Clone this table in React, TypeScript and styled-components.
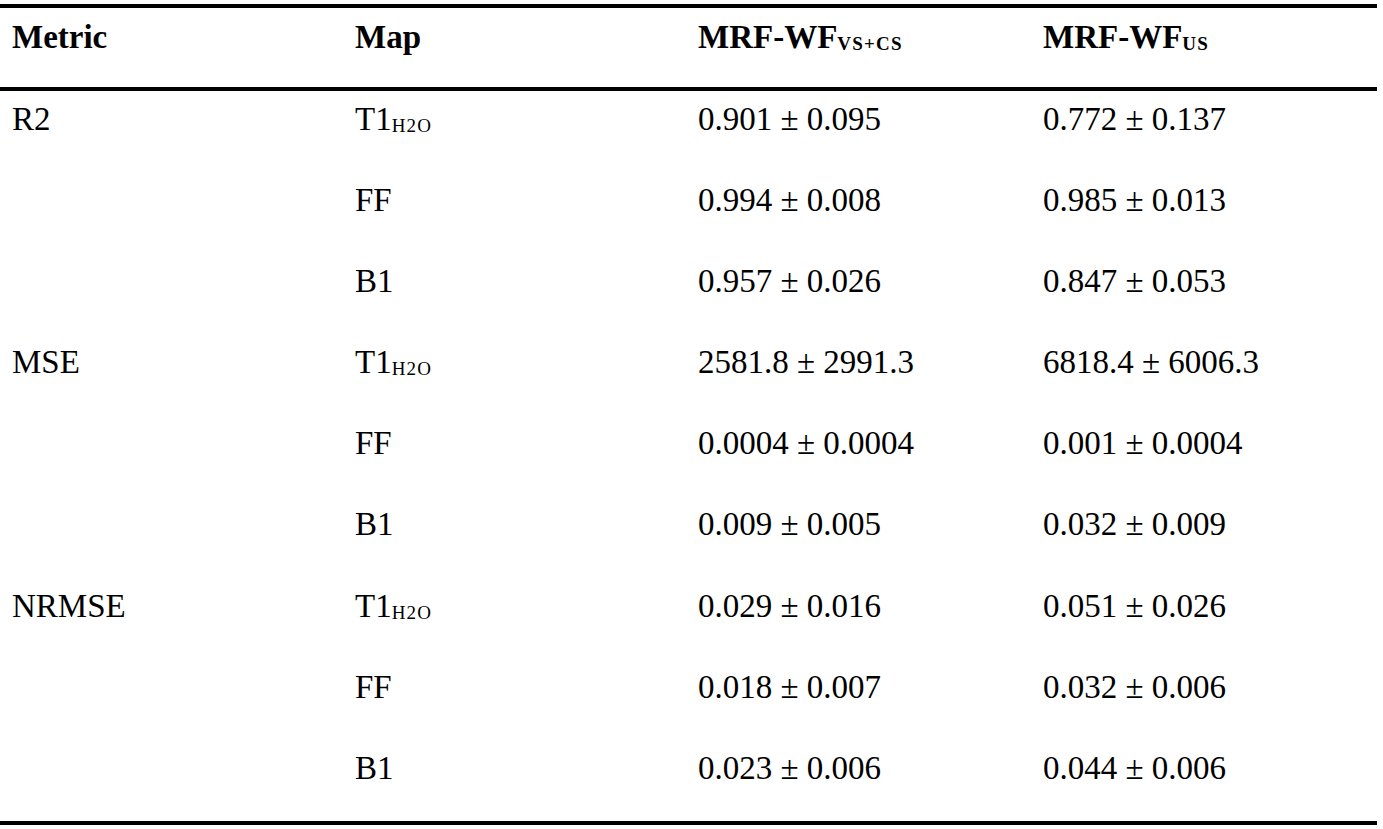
import React from "react";
import styled, { createGlobalStyle } from "styled-components";

const GlobalStyle = createGlobalStyle`
  html, body {
    margin: 0;
    padding: 0;
    background: #ffffff;
  }
`;

const Page = styled.div`
  width: 1383px;
  height: 829px;
  padding-top: 4px;
  box-sizing: border-box;
  overflow: hidden;
  background: #ffffff;
`;

const Table = styled.table`
  width: 1377px;
  border-collapse: separate;
  border-spacing: 0;
  table-layout: fixed;
  font-family: "Liberation Serif", "Times New Roman", serif;
  font-size: 33px;
  line-height: 40px;
  color: #000;
`;

const HeadCell = styled.th`
  text-align: left;
  font-weight: 700;
  vertical-align: top;
  padding: 9px 0 30px 12px;
  border-top: 4px solid #000;
  border-bottom: 4px solid #000;
  white-space: nowrap;
`;

const Row = styled.tr`
  &:last-child td {
    border-bottom: 4px solid #000;
  }
`;

const Cell = styled.td`
  vertical-align: top;
  padding: 8px 0 33.1px 12px;
  white-space: nowrap;
`;

const Sub = styled.sub<{ $bold?: boolean }>`
  font-size: 19px;
  font-weight: ${(p) => (p.$bold ? 700 : 400)};
  letter-spacing: 1.2px;
  line-height: 0;
  vertical-align: -2px;
`;

type Entry = { metric: string; map: string; sub?: string; a: string; b: string };

const rows: Entry[] = [
  { metric: "R2", map: "T1", sub: "H2O", a: "0.901 ± 0.095", b: "0.772 ± 0.137" },
  { metric: "", map: "FF", a: "0.994 ± 0.008", b: "0.985 ± 0.013" },
  { metric: "", map: "B1", a: "0.957 ± 0.026", b: "0.847 ± 0.053" },
  { metric: "MSE", map: "T1", sub: "H2O", a: "2581.8 ± 2991.3", b: "6818.4 ± 6006.3" },
  { metric: "", map: "FF", a: "0.0004 ± 0.0004", b: "0.001 ± 0.0004" },
  { metric: "", map: "B1", a: "0.009 ± 0.005", b: "0.032 ± 0.009" },
  { metric: "NRMSE", map: "T1", sub: "H2O", a: "0.029 ± 0.016", b: "0.051 ± 0.026" },
  { metric: "", map: "FF", a: "0.018 ± 0.007", b: "0.032 ± 0.006" },
  { metric: "", map: "B1", a: "0.023 ± 0.006", b: "0.044 ± 0.006" },
];

export default function App() {
  return (
    <Page>
      <GlobalStyle />
      <Table>
        <colgroup>
          <col style={{ width: 343 }} />
          <col style={{ width: 343 }} />
          <col style={{ width: 345 }} />
          <col />
        </colgroup>
        <thead>
          <tr>
            <HeadCell>Metric</HeadCell>
            <HeadCell>Map</HeadCell>
            <HeadCell>
              MRF-WF<Sub $bold>VS+CS</Sub>
            </HeadCell>
            <HeadCell>
              MRF-WF<Sub $bold>US</Sub>
            </HeadCell>
          </tr>
        </thead>
        <tbody>
          {rows.map((r, i) => (
            <Row key={i}>
              <Cell>{r.metric}</Cell>
              <Cell>
                {r.map}
                {r.sub && <Sub>{r.sub}</Sub>}
              </Cell>
              <Cell>{r.a}</Cell>
              <Cell>{r.b}</Cell>
            </Row>
          ))}
        </tbody>
      </Table>
    </Page>
  );
}
